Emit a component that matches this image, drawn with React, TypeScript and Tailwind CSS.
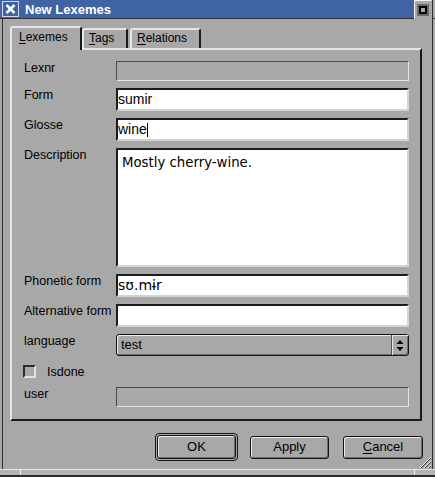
import { FC, ReactNode } from 'react';

const ui = "font-['Liberation_Sans',Arial,sans-serif]";
const mono = "font-['DejaVu_Sans',sans-serif]";

const whiteBox =
  'bg-white border-2 border-t-[#1c1c1c] border-l-[#1c1c1c] border-b-[#d4d4d4] border-r-[#d4d4d4]';
const grayBox =
  'border border-t-[#4a4a4a] border-l-[#4a4a4a] border-b-[#e6e6e6] border-r-[#e6e6e6]';
const btn =
  'flex items-center justify-center rounded-[3px] border border-[#141414] bg-[#a8a8a8] shadow-[inset_1px_1px_0_#ececec,inset_-1px_-1px_0_#6c6c6c] text-[13px] text-black';

const Label: FC<{ children: ReactNode }> = ({ children }) => (
  <div className="text-[12.5px] leading-[14px] text-black">{children}</div>
);

const CloseIcon = () => (
  <svg width="17" height="16" viewBox="0 0 17 16">
    <rect x="0.5" y="0.5" width="16" height="15" fill="#3f62a3" stroke="#d4d9e6" />
    <path d="M4.5 4 L12.5 12 M12.5 4 L4.5 12" stroke="#fff" strokeWidth="2.6" />
  </svg>
);

const MaxIcon = () => (
  <svg width="18" height="19" viewBox="0 0 18 19">
    <rect x="0" y="0" width="18" height="19" fill="#a8a8a8" />
    <path d="M0.5 18.5 V0.5 H17.5" stroke="#f4f4f4" fill="none" />
    <rect x="3" y="4" width="12" height="12" fill="#6a6a6a" />
    <rect x="5" y="6" width="8" height="8" fill="#000" />
    <rect x="7" y="8" width="4" height="4" fill="#a8a8a8" />
  </svg>
);

const ComboArrows = () => (
  <svg width="10" height="13" viewBox="0 0 10 13">
    <path d="M5 1 L1.5 5 H8.5 Z" fill="#000" />
    <path d="M1.5 8 H8.5 L5 12 Z" fill="#000" />
  </svg>
);

const Grip = () => (
  <svg width="14" height="14" viewBox="0 0 14 14">
    <path d="M2 13 L13 2 M6 13 L13 6 M10 13 L13 10" stroke="#f0f0f0" strokeWidth="1" />
    <path d="M3 13 L13 3 M7 13 L13 7 M11 13 L13 11" stroke="#3a3a3a" strokeWidth="1" />
  </svg>
);

const App: FC = () => {
  return (
    <div className={`w-[435px] h-[477px] bg-[#a8a8a8] flex flex-col overflow-hidden ${ui}`}>
      {/* title bar */}
      <div className="flex h-[19px] border-b border-[#333]">
        <div className="flex-1 flex items-center bg-[#4063a3] pl-[2px]">
          <CloseIcon />
          <span className="ml-[6px] text-[13px] font-bold text-white leading-none">New Lexemes</span>
        </div>
        <MaxIcon />
        <div className="w-[3px] border-l border-[#2e2e2e]" />
      </div>

      <div className="relative flex-1 flex flex-col mx-[2px] border-x border-[#2e2e2e] pt-[7px]">
        {/* tabs */}
        <div className="flex items-end ml-[7px]">
          <div className="relative z-10 h-[24px] w-[72px] -mb-[2px] bg-[#a8a8a8] border-t-2 border-l-2 border-r-2 border-t-[#e6e6e6] border-l-[#e6e6e6] border-r-[#1a1a1a] rounded-t-[3px] pl-[7px] pt-[2px] text-[12px] leading-[14px]">
            <span className="underline underline-offset-2">L</span>exemes
          </div>
          <div className="h-[20px] w-[46px] border-t-2 border-l-2 border-r-2 border-t-[#e6e6e6] border-l-[#e6e6e6] border-r-[#1a1a1a] rounded-t-[3px] pl-[5px] pt-[1px] text-[12px] leading-[14px]">
            <span className="underline underline-offset-2">T</span>ags
          </div>
          <div className="ml-[2px] h-[20px] w-[71px] border-t-2 border-l-2 border-r-2 border-t-[#e6e6e6] border-l-[#e6e6e6] border-r-[#1a1a1a] rounded-t-[3px] pl-[5px] pt-[1px] text-[12px] leading-[14px]">
            <span className="underline underline-offset-2">R</span>elations
          </div>
        </div>

        {/* tab panel */}
        <div className="ml-[7px] w-[412px] border-2 border-t-[#e6e6e6] border-l-[#e6e6e6] border-r-[#1a1a1a] border-b-[#1a1a1a] pt-[11px] pl-[12px] pb-[12px]">
          <div className="grid grid-cols-[92px_293px] gap-y-[7px] items-start">
            <Label>Lexnr</Label>
            <div className={`h-[20px] ${grayBox}`} />

            <Label>Form</Label>
            <div className={`h-[23px] ${whiteBox} flex items-center text-[14px]`}>sumir</div>

            <Label>Glosse</Label>
            <div className={`h-[23px] ${whiteBox} flex items-center text-[14px]`}>
              wine
              <span className="inline-block w-px h-[14px] bg-black" />
            </div>

            <Label>Description</Label>
            <div className={`h-[119px] ${whiteBox} pl-[4px] pt-[5px] text-[13.3px] leading-[16px] ${mono}`}>
              Mostly cherry-wine.
            </div>

            <Label>Phonetic form</Label>
            <div className={`h-[23px] ${whiteBox} flex items-center text-[14px] ${mono}`}>sʊ.mɨr</div>

            <Label>Alternative form</Label>
            <div className={`h-[23px] ${whiteBox}`} />

            <Label>language</Label>
            <div className="h-[22px] flex rounded-[3px] border border-[#141414] shadow-[inset_1px_1px_0_#ececec,inset_-1px_-1px_0_#6c6c6c]">
              <div className="flex-1 flex items-center pl-[4px] text-[13px]">test</div>
              <div className="w-[17px] flex items-center justify-center border-l border-[#505050] shadow-[inset_1px_1px_0_#e4e4e4]">
                <ComboArrows />
              </div>
            </div>

            <div className="col-span-2 h-[17px] flex items-center -ml-[1px]">
              <div className="w-[13px] h-[13px] border-2 border-t-[#2a2a2a] border-l-[#2a2a2a] border-b-[#e2e2e2] border-r-[#e2e2e2] bg-[#a8a8a8]" />
              <span className="ml-[11px] text-[12.5px] leading-[14px]">Isdone</span>
            </div>

            <Label>user</Label>
            <div className={`h-[20px] ${grayBox}`} />
          </div>
        </div>

        {/* buttons */}
        <div className="mt-[12px] flex items-center justify-end pr-[9px]">
          <div className="h-[28px] w-[83px] rounded-[4px] border border-[#141414] p-[1px]">
            <div className={`h-full w-full ${btn}`}>OK</div>
          </div>
          <div className={`ml-[12px] h-[23px] w-[79px] ${btn}`}>Apply</div>
          <div className={`ml-[14px] h-[23px] w-[80px] ${btn}`}>
            <span className="underline underline-offset-2">C</span>ancel
          </div>
        </div>

        <div className="absolute right-0 bottom-0">
          <Grip />
        </div>
      </div>

      {/* resize bar */}
      <div className="h-[8px] flex border-t border-[#e8e8e8] border-b-2 border-b-[#2a2a2a] bg-[#b4b4b4]">
        <div className="w-[20px]" />
        <div className="flex-1 border-l border-[#f0f0f0]" />
        <div className="w-[21px] border-l border-[#f0f0f0]" />
      </div>
    </div>
  );
};

export default App;
